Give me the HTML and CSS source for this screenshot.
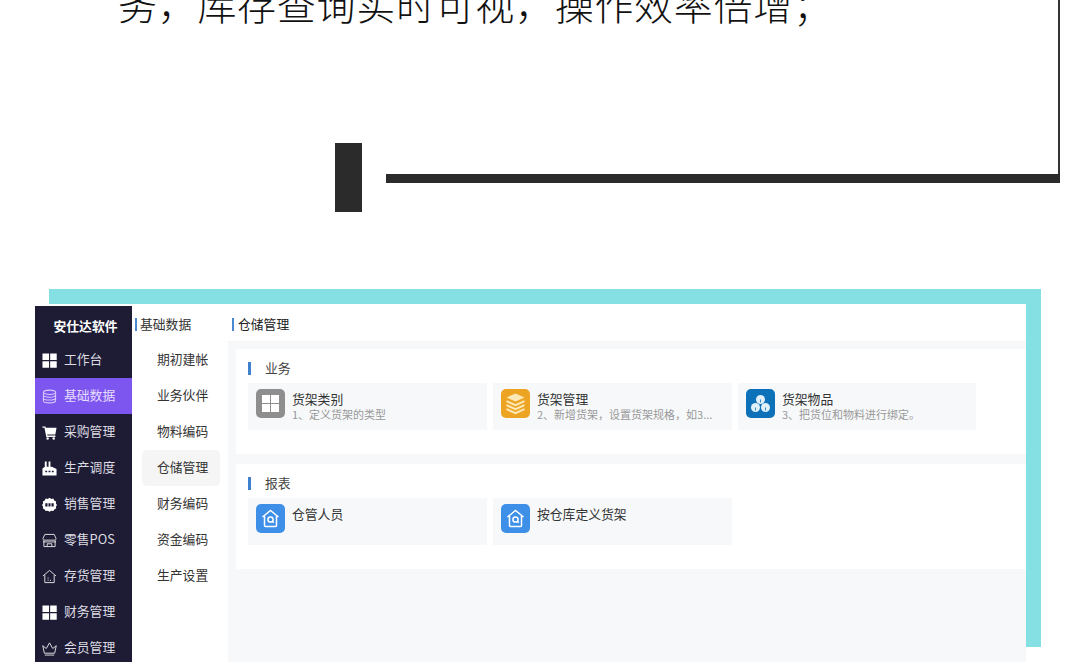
FILE: index.html
```html
<!DOCTYPE html>
<html lang="zh-CN">
<head>
<meta charset="utf-8">
<title>安仕达软件</title>
<link rel="stylesheet" href="styles.css">
</head>
<body>
<section class="article">
  <p class="article-text">务，库存查询实时可视，操作效率倍增；</p>
</section>
<div class="rule-row">
  <div class="rule-block"></div>
  <div class="rule-line"></div>
</div>
<div class="shot">
  <div class="app">
    <nav class="sidebar">
      <div class="brand">安仕达软件</div>
      <a class="nav-item"><svg class="nav-icon" viewBox="0 0 16 16"><path fill="#fff" d="M.5.500h7v7h-7zM8.700.500h7v7h-7zM.5 8.700h7v7h-7zM8.700 8.700h7v7h-7z"/></svg><span class="nav-label">工作台</span></a>
      <a class="nav-item active"><svg class="nav-icon" viewBox="0 0 16 16" fill="none" stroke="#d8c8fb" stroke-width="1.100"><ellipse cx="8" cy="3.500" rx="6.500" ry="2.300"/><path d="M1.500 3.500v9c0 1.300 2.900 2.300 6.500 2.300s6.500-1 6.500-2.300v-9M1.500 6.500c0 1.300 2.900 2.300 6.500 2.300s6.500-1 6.500-2.300M1.500 9.500c0 1.300 2.900 2.300 6.500 2.300s6.500-1 6.500-2.300"/></svg><span class="nav-label">基础数据</span></a>
      <a class="nav-item"><svg class="nav-icon" viewBox="0 0 16 16"><path fill="#fff" d="M.5 1.500h3.100l.5 1.500H15.500l-1.300 7H5.500l.3 1.300h8.500v1.400H4.600L2.600 2.900H.5z"/><circle fill="#fff" cx="6" cy="14.300" r="1.300"/><circle fill="#fff" cx="12.500" cy="14.300" r="1.300"/></svg><span class="nav-label">采购管理</span></a>
      <a class="nav-item"><svg class="nav-icon" viewBox="0 0 16 16"><path fill="#fff" d="M3 .5h2v5.500h2V.5h2v5.500h1.500L15.500 8.500V15.500H.5V8L3 6z"/><path fill="#1e1b34" d="M3.500 10.500h2v1.500h-2zM7 10.500h2v1.500H7zM10.500 10.500h2v1.500h-2z"/></svg><span class="nav-label">生产调度</span></a>
      <a class="nav-item"><svg class="nav-icon" viewBox="0 0 16 16"><path fill="#fff" d="M8 .8l1.900 1.200 2.200-.3 1 2 2 1-.3 2.200L16 8.500l-1.200 1.800.3 2-2 1-1 1.700-2.200-.3L8 15.800l-1.900-1.100-2.200.3-1-1.700-2-1 .3-2L0 8.500l1.200-1.600L.9 4.700l2-1 1-2 2.200.3z"/><path fill="#1e1b34" d="M3.500 6.700h2.400v3.500H3.500zM6.900 6.700h2.200v3.500H6.900zM10.100 6.700h2.400v3.500h-2.400z"/></svg><span class="nav-label">销售管理</span></a>
      <a class="nav-item"><svg class="nav-icon" viewBox="0 0 16 16" fill="none" stroke="#e4e4e8" stroke-width="1"><path d="M3 1.500h10l2 4.500c0 1-1 1.600-2.300 1.600H3.300C2 7.600 1 7 1 6zM2 7.600v6.900h12V7.600M1 9.500h14M5.500 14.500v-3h5v3"/></svg><span class="nav-label">零售POS</span></a>
      <a class="nav-item"><svg class="nav-icon" viewBox="0 0 16 16" fill="none" stroke="#e4e4e8" stroke-width="1"><path d="M1 7.500L8 1.500l7 6M3 6.500v8h10v-8"/><path stroke-dasharray="1.200 1.200" d="M6.500 9v5M9 11.500v2.500"/></svg><span class="nav-label">存货管理</span></a>
      <a class="nav-item"><svg class="nav-icon" viewBox="0 0 16 16"><path fill="#fff" d="M.5.500h7v7h-7zM8.700.500h7v7h-7zM.5 8.700h7v7h-7zM8.700 8.700h7v7h-7z"/></svg><span class="nav-label">财务管理</span></a>
      <a class="nav-item"><svg class="nav-icon" viewBox="0 0 16 16" fill="none" stroke="#e4e4e8" stroke-width="1"><path d="M.8 5l3.700 3L8 2l3.500 6 3.700-3-1.700 8h-11zM3 15h10"/></svg><span class="nav-label">会员管理</span></a>
    </nav>
    <aside class="submenu">
      <h2 class="pane-title">基础数据</h2>
      <ul class="submenu-list">
        <li class="submenu-item">期初建帐</li>
        <li class="submenu-item">业务伙伴</li>
        <li class="submenu-item">物料编码</li>
        <li class="submenu-item current">仓储管理</li>
        <li class="submenu-item">财务编码</li>
        <li class="submenu-item">资金编码</li>
        <li class="submenu-item">生产设置</li>
      </ul>
    </aside>
    <main class="main">
      <h2 class="pane-title main-title">仓储管理</h2>
      <div class="content">
        <section class="card">
          <h3 class="card-title">业务</h3>
          <div class="tiles">
            <div class="tile">
              <span class="tile-icon gray"><svg viewBox="0 0 29 29"><path fill="#fff" d="M6 6h8v8H6zM15 6h8v8h-8zM6 15h8v8H6zM15 15h8v8h-8z"/></svg></span>
              <div class="tile-text"><div class="tile-name">货架类别</div><div class="tile-desc">1、定义货架的类型</div></div>
            </div>
            <div class="tile">
              <span class="tile-icon orange"><svg viewBox="0 0 29 29"><path fill="#fde9b8" d="M14.500 4.500l9 4-9 4-9-4z"/><path fill="none" stroke="#fde9b8" stroke-width="2" d="M5.500 12.200l9 4 9-4M5.500 16.200l9 4 9-4M5.500 20.200l9 4 9-4"/></svg></span>
              <div class="tile-text"><div class="tile-name">货架管理</div><div class="tile-desc">2、新增货架，设置货架规格，如3...</div></div>
            </div>
            <div class="tile">
              <span class="tile-icon blue"><svg viewBox="0 0 29 29"><g fill="#dff0fb"><circle cx="14.500" cy="10.500" r="4.500"/><circle cx="9.500" cy="18.500" r="4.500"/><circle cx="19.500" cy="18.500" r="4.500"/></g><path fill="none" stroke="#0c71b8" stroke-width=".8" d="M14.500 10.500v3M9.500 18.500v3M19.500 18.500v3"/></svg></span>
              <div class="tile-text"><div class="tile-name">货架物品</div><div class="tile-desc">3、把货位和物料进行绑定。</div></div>
            </div>
          </div>
        </section>
        <section class="card">
          <h3 class="card-title">报表</h3>
          <div class="tiles">
            <div class="tile">
              <span class="tile-icon sky"><svg viewBox="0 0 29 29" fill="none" stroke="#fff" stroke-width="1.500"><path d="M6.500 13l8-6.500 8 6.500M8.500 12v9.500c0 .6.400 1 1 1h10c.6 0 1-.4 1-1V12"/><circle cx="14.500" cy="15.500" r="2.600"/><path d="M16.500 17.500l1.300 1.300"/></svg></span>
              <div class="tile-text"><div class="tile-name">仓管人员</div></div>
            </div>
            <div class="tile">
              <span class="tile-icon sky"><svg viewBox="0 0 29 29" fill="none" stroke="#fff" stroke-width="1.500"><path d="M6.500 13l8-6.500 8 6.500M8.500 12v9.500c0 .6.400 1 1 1h10c.6 0 1-.4 1-1V12"/><circle cx="14.500" cy="15.500" r="2.600"/><path d="M16.500 17.500l1.300 1.300"/></svg></span>
              <div class="tile-text"><div class="tile-name">按仓库定义货架</div></div>
            </div>
          </div>
        </section>
      </div>
    </main>
  </div>
</div>
</body>
</html>
```
FILE: styles.css
```css
* { box-sizing: border-box; }
html, body { margin: 0; padding: 0; }
body {
  width: 1080px;
  height: 669px;
  overflow: hidden;
  background: #fff;
  color: #333;
  font-family: "Noto Sans CJK SC", "Liberation Sans", sans-serif;
}
.article {
  width: 1060px;
  height: 174px;
  padding-left: 118px;
  border-right: 2px solid #333;
  overflow: hidden;
}
.article-text {
  margin: -25px 0 0;
  font-size: 39px;
  line-height: 56px;
  letter-spacing: .7px;
  font-weight: 300;
  color: #111;
  white-space: nowrap;
}
.rule-row {
  display: flex;
  align-items: flex-start;
  gap: 24px;
  height: 146px;
  margin: -31px 0 0 335px;
}
.rule-block { width: 27px; height: 69px; background: #2b2b2b; }
.rule-line { width: 674px; height: 9px; margin-top: 31px; background: #2b2b2b; }
.shot {
  width: 992px;
  height: 358px;
  margin-left: 49px;
  padding: 15px 15px 0 0;
  background: #84e0e3;
}
.app {
  display: flex;
  width: 991px;
  height: 358px;
  margin-left: -14px;
  background: #fff;
}
.sidebar {
  flex: none;
  width: 97px;
  margin-top: 2px;
  background: #1e1b34;
}
.brand {
  height: 36px;
  padding: 4px 0 0 4px;
  font-size: 12.8px;
  line-height: 32px;
  font-weight: 700;
  color: #fff;
  text-align: center;
}
.nav-item {
  display: flex;
  align-items: center;
  gap: 7px;
  height: 36px;
  padding-left: 7px;
  font-size: 12.8px;
  color: #dcdce2;
}
.nav-label { margin-top: -4px; }
.nav-item.active { background: #7c56ee; color: #e6dcff; }
.nav-icon { flex: none; width: 15px; height: 15px; }
.submenu { flex: none; width: 96px; }
.pane-title {
  position: relative;
  height: 38px;
  margin: 0;
  padding: 11px 0 0 8px;
  font-size: 12.8px;
  line-height: 18px;
  font-weight: 400;
  color: #333;
}
.pane-title::before {
  content: "";
  position: absolute;
  left: 3px;
  top: 14px;
  width: 2px;
  height: 13px;
  background: #4a88cf;
}
.submenu-list {
  margin: 0;
  padding: 0 8px 0 10px;
  list-style: none;
}
.submenu-item {
  height: 36px;
  padding-left: 15px;
  font-size: 12.8px;
  line-height: 33px;
  color: #333;
  border-radius: 5px;
}
.submenu-item.current { background: #f5f5f5; }
.main { display: flex; flex-direction: column; flex: 1; min-width: 0; }
.main-title { padding-left: 10px; border-bottom: 1px solid #f5f5f5; color: #222; }
.main-title::before { left: 4px; }
.content {
  flex: 1;
  display: flex;
  flex-direction: column;
  gap: 10px;
  padding: 7px 0 0 8px;
  background: #f6f8f9;
}
.card { height: 105px; padding: 12px 0 0 12px; background: #fff; }
.card-title {
  position: relative;
  height: 22px;
  margin: 0;
  padding-left: 17px;
  font-size: 12.8px;
  line-height: 14px;
  font-weight: 400;
  color: #444;
}
.card-title::before {
  content: "";
  position: absolute;
  left: 0;
  top: 1px;
  width: 2.5px;
  height: 13px;
  background: #3f80cf;
}
.tiles {
  display: grid;
  grid-template-columns: 239px 239px 238px;
  column-gap: 6px;
}
.tile {
  display: flex;
  gap: 7px;
  height: 47px;
  padding: 6px 0 0 8px;
  background: #f6f8fa;
}
.tile-icon { flex: none; width: 29px; height: 29px; border-radius: 5px; }
.tile-icon svg { display: block; width: 29px; height: 29px; }
.gray { background: #8e8e8e; }
.orange { background: #eca422; }
.blue { background: #0c71b8; }
.sky { background: #3d8fe8; }
.tile-text { min-width: 0; }
.tile-name { font-size: 12.8px; line-height: 19px; color: #333; }
.tile-desc { font-size: 11px; line-height: 13px; color: #999; white-space: nowrap; }
```
